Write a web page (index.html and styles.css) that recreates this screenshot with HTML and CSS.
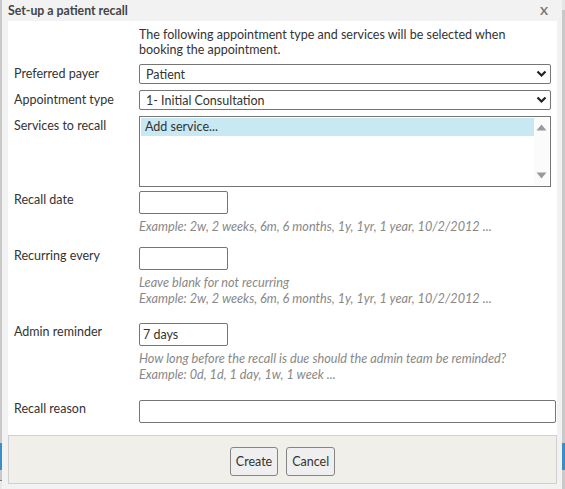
FILE: index.html
```html
<!DOCTYPE html>
<html>
<head>
<meta charset="utf-8">
<link rel="stylesheet" href="styles.css">
</head>
<body>
<div class="dialog">
  <div class="titlebar">
    <span class="title">Set-up a patient recall</span>
    <span class="close">X</span>
  </div>
  <div class="panel">
    <div class="intro">The following appointment type and services will be selected when booking the appointment.</div>
    <div class="row r-payer">
      <div class="label">Preferred payer</div>
      <div class="field">
        <div class="select"><span>Patient</span>
          <svg width="11" height="8" viewBox="0 0 11 8"><path d="M1.5 1.5 L5.5 5.5 L9.5 1.5" fill="none" stroke="#222" stroke-width="2.2"/></svg>
        </div>
      </div>
    </div>
    <div class="row r-type">
      <div class="label">Appointment type</div>
      <div class="field">
        <div class="select"><span>1- Initial Consultation</span>
          <svg width="11" height="8" viewBox="0 0 11 8"><path d="M1.5 1.5 L5.5 5.5 L9.5 1.5" fill="none" stroke="#222" stroke-width="2.2"/></svg>
        </div>
      </div>
    </div>
    <div class="row r-services">
      <div class="label">Services to recall</div>
      <div class="field">
        <div class="listbox">
          <div class="options"><div class="option sel">Add service...</div></div>
          <div class="scrollbar">
            <svg width="11" height="8" viewBox="0 0 11 8"><path d="M0.5 7.5 L5.5 1.5 L10.5 7.5 Z" fill="#9a9a9a"/></svg>
            <svg width="11" height="8" viewBox="0 0 11 8"><path d="M0.5 0.5 L5.5 6.5 L10.5 0.5 Z" fill="#9a9a9a"/></svg>
          </div>
        </div>
      </div>
    </div>
    <div class="row r-date">
      <div class="label">Recall date</div>
      <div class="field">
        <div class="input short"></div>
        <div class="help">Example: 2w, 2 weeks, 6m, 6 months, 1y, 1yr, 1 year, 10/2/2012 ...</div>
      </div>
    </div>
    <div class="row r-recur">
      <div class="label">Recurring every</div>
      <div class="field">
        <div class="input short"></div>
        <div class="help">Leave blank for not recurring</div>
        <div class="help">Example: 2w, 2 weeks, 6m, 6 months, 1y, 1yr, 1 year, 10/2/2012 ...</div>
      </div>
    </div>
    <div class="row r-admin">
      <div class="label">Admin reminder</div>
      <div class="field">
        <div class="input short">7 days</div>
        <div class="help">How long before the recall is due should the admin team be reminded?</div>
        <div class="help">Example: 0d, 1d, 1 day, 1w, 1 week ...</div>
      </div>
    </div>
    <div class="row r-reason">
      <div class="label">Recall reason</div>
      <div class="field">
        <div class="input wide"></div>
      </div>
    </div>
  </div>
  <div class="footer">
    <button class="btn">Create</button>
    <button class="btn">Cancel</button>
  </div>
</div>
</body>
</html>
```
FILE: styles.css
```css
html, body {
  margin: 0;
  padding: 0;
  height: 489px;
  overflow: hidden;
}
body {
  font-family: Lato, "Open Sans", sans-serif;
  font-size: 12.5px;
  color: #333;
  background:
    linear-gradient(to bottom, #c9c9c9 0, #c9c9c9 443px, #3b8fc9 443px, #3b8fc9 470px, #c9c9c9 470px, #c9c9c9 480px, #777 480px, #777 481px, #e8e8e8 481px) left top / 2px 100% no-repeat,
    linear-gradient(to bottom, #e6e6e6 0, #e6e6e6 10px, #c9c9c9 10px, #c9c9c9 443px, #3b8fc9 443px, #3b8fc9 470px, #c9c9c9 470px) right top / 3px 100% no-repeat,
    #f0f0f0;
  padding: 0 3px 0 2px;
  box-sizing: border-box;
}
.dialog {
  background: #f2f2f2;
  height: 489px;
  padding: 0 5px 0 6px;
  box-sizing: border-box;
}
.titlebar {
  height: 21px;
  display: flex;
  align-items: center;
  justify-content: space-between;
  padding: 0 9px 0 0;
}
.title {
  font-weight: bold;
  font-size: 12.3px;
  color: #444;
}
.close {
  font-weight: bold;
  color: #777;
  font-size: 12px;
}
.panel {
  background: #fff;
  height: 414px;
  padding: 6px 0 0 6px;
  box-sizing: border-box;
}
.intro {
  margin-left: 125px;
  width: 390px;
  line-height: 15px;
  margin-bottom: 7px;
}
.row {
  display: flex;
}
.label {
  width: 125px;
  flex: none;
  padding-top: 1px;
}
.field {
  flex: 1;
  min-width: 0;
  padding-right: 6px;
}
.select {
  height: 20px;
  border: 1px solid #767676;
  border-radius: 2px;
  box-sizing: border-box;
  display: flex;
  align-items: center;
  justify-content: space-between;
  padding: 0 3px 0 6px;
}
.r-payer { margin-bottom: 6px; }
.r-payer .label, .r-type .label { padding-top: 2px; }
.r-services .label { padding-top: 2px; }
.r-type { margin-bottom: 6px; }
.listbox {
  height: 71px;
  border: 1px solid #767676;
  box-sizing: border-box;
  display: flex;
  padding: 1px;
}
.options { flex: 1; }
.option {
  height: 18px;
  line-height: 18px;
  padding-left: 4px;
}
.option.sel { background: #c8e8f2; }
.scrollbar {
  width: 15px;
  display: flex;
  flex-direction: column;
  justify-content: space-between;
  align-items: center;
  padding: 5px 0 5px;
  background: #fbfbfb;
}
.r-services { margin-bottom: 4px; }
.input {
  height: 23px;
  border: 1px solid #767676;
  border-radius: 2px;
  box-sizing: border-box;
  line-height: 21px;
  padding-left: 3px;
}
.input.short { width: 89px; }
.input.wide { width: 417px; }
.help {
  font-style: italic;
  font-size: 12.7px;
  color: #888;
  line-height: 16px;
}
.input + .help { margin-top: 4px; }
.r-date { margin-bottom: 13px; }
.r-recur { margin-bottom: 17px; }
.r-admin { margin-bottom: 18px; }
.footer {
  height: 49px;
  background: #f1efe9;
  border: 1px solid #d0d0d0;
  box-sizing: border-box;
  display: flex;
  justify-content: center;
  align-items: center;
  gap: 8px;
  padding: 4px 0 0 0;
}
.btn {
  font-family: Lato, "Open Sans", sans-serif;
  font-size: 12.5px;
  color: #333;
  height: 29px;
  background: #efefef;
  border: 1px solid #858585;
  border-radius: 3px;
  padding: 0 5px;
}
```
